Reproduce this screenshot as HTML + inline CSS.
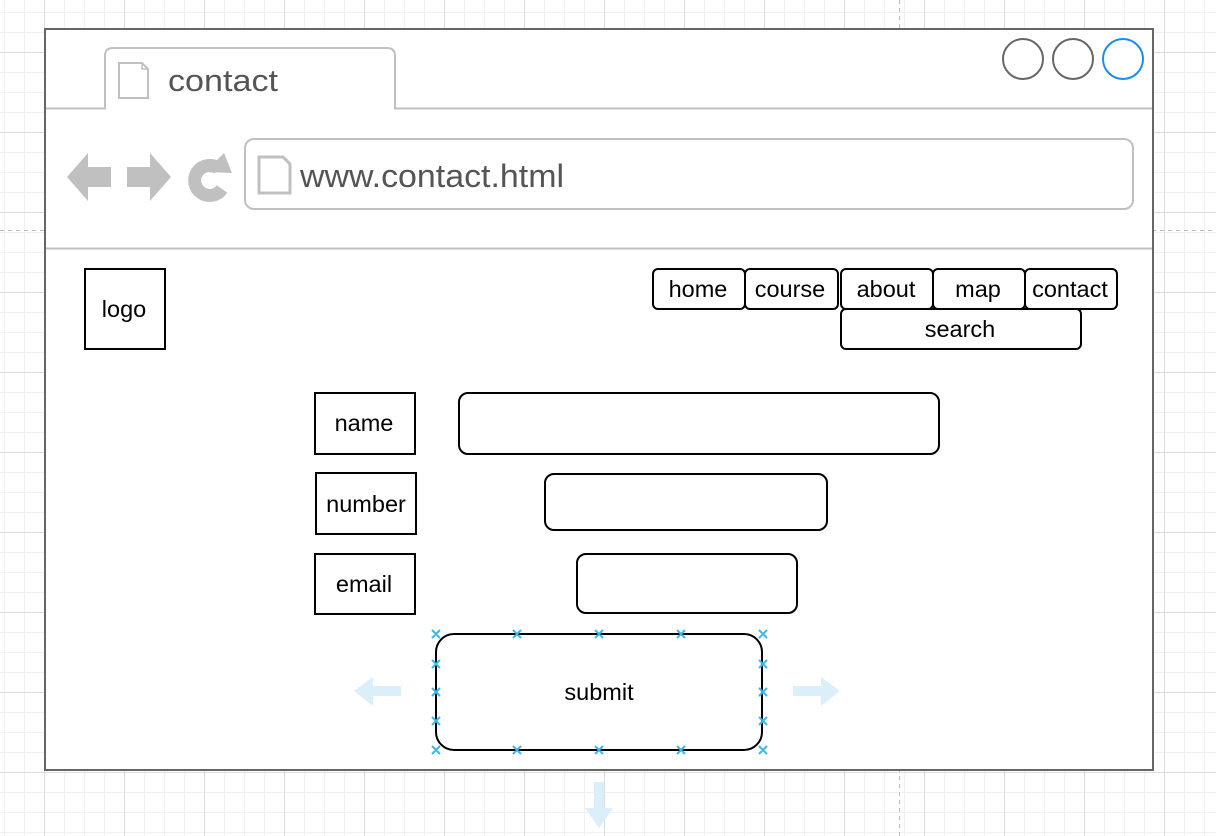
<!DOCTYPE html>
<html><head><meta charset="utf-8"><style>
html,body{margin:0;padding:0;width:1216px;height:836px;overflow:hidden;background:#fff}
svg{display:block}
text{font-family:"Liberation Sans",sans-serif}
</style></head><body>
<svg width="1216" height="836" viewBox="0 0 1216 836">
<defs>
<pattern id="minor" width="20" height="20" patternUnits="userSpaceOnUse" x="4" y="12">
<path d="M0 0.5H20M0.5 0V20" stroke="#f0f0f0" stroke-width="1" fill="none"/>
</pattern>
<pattern id="major" width="80" height="80" patternUnits="userSpaceOnUse" x="44" y="52">
<path d="M0 0.5H80M0.5 0V80" stroke="#dcdcdc" stroke-width="1" fill="none"/>
</pattern>
</defs>
<rect width="1216" height="836" fill="url(#minor)"/>
<rect width="1216" height="836" fill="url(#major)"/>
<line x1="899.5" y1="0" x2="899.5" y2="836" stroke="#bbb" stroke-dasharray="4,4"/>
<line x1="0" y1="230.5" x2="1216" y2="230.5" stroke="#bbb" stroke-dasharray="4,4"/>
<rect x="45" y="29" width="1108" height="741" fill="#fff" stroke="#666" stroke-width="2"/>
<path d="M46 108.5H105V56Q105 48 113 48H387Q395 48 395 56V108.5H1152" fill="none" stroke="#c0c0c0" stroke-width="2"/>
<line x1="46" y1="248.5" x2="1152" y2="248.5" stroke="#c0c0c0" stroke-width="2"/>
<path d="M119 63H142L148 69V98H119Z" fill="#fff" stroke="#c0c0c0" stroke-width="2"/>
<path d="M142 63V69H148" fill="none" stroke="#c0c0c0" stroke-width="1.5"/>
<text x="168" y="91" font-size="31" fill="#555" textLength="110" lengthAdjust="spacingAndGlyphs">contact</text>
<circle cx="1023" cy="59" r="20" fill="#fff" stroke="#666" stroke-width="2"/>
<circle cx="1073" cy="59" r="20" fill="#fff" stroke="#666" stroke-width="2"/>
<circle cx="1123" cy="59" r="20" fill="#fff" stroke="#1a8cf0" stroke-width="2"/>
<path d="M67 177L88 153V167H111V187H88V201Z" fill="#c0c0c0"/>
<path d="M171 177L150 153V167H127V187H150V201Z" fill="#c0c0c0"/>
<path d="M218 168A15 15 0 1 0 222 189" fill="none" stroke="#c0c0c0" stroke-width="13"/>
<path d="M205 172L232 173L224 153Z" fill="#c0c0c0"/>
<rect x="245" y="139" width="888" height="70" rx="9" fill="#fff" stroke="#c0c0c0" stroke-width="2"/>
<path d="M259 157H283L290 164V193H259Z" fill="#fff" stroke="#c0c0c0" stroke-width="3"/>
<text x="300" y="187" font-size="32" fill="#555" textLength="264" lengthAdjust="spacingAndGlyphs">www.contact.html</text>
<rect x="85" y="269" width="80" height="80" fill="#fff" stroke="#000" stroke-width="2"/>
<text x="124" y="317" font-size="23.5" text-anchor="middle">logo</text>
<g fill="#fff" stroke="#000" stroke-width="2">
<rect x="653" y="269" width="92" height="40" rx="5"/>
<rect x="745" y="269" width="93" height="40" rx="5"/>
<rect x="841" y="269" width="92" height="40" rx="5"/>
<rect x="933" y="269" width="92" height="40" rx="5"/>
<rect x="1025" y="269" width="92" height="40" rx="5"/>
<rect x="841" y="309" width="240" height="40" rx="5"/>
</g>
<g font-size="23.5" text-anchor="middle" fill="#000">
<text x="698" y="297">home</text>
<text x="790" y="297">course</text>
<text x="886" y="297">about</text>
<text x="978" y="297">map</text>
<text x="1070" y="297">contact</text>
<text x="960" y="337">search</text>
</g>
<g fill="#fff" stroke="#000" stroke-width="2">
<rect x="315" y="393" width="100" height="61"/>
<rect x="459" y="393" width="480" height="61" rx="9"/>
<rect x="316" y="473" width="100" height="61"/>
<rect x="545" y="474" width="282" height="56" rx="9"/>
<rect x="315" y="554" width="100" height="60"/>
<rect x="577" y="554" width="220" height="59" rx="9"/>
<rect x="436" y="634" width="326" height="116" rx="18"/>
</g>
<g font-size="23.5" text-anchor="middle" fill="#000">
<text x="364" y="431">name</text>
<text x="366" y="512">number</text>
<text x="364" y="592">email</text>
<text x="599" y="700">submit</text>
</g>
<g stroke="#3bb6ee" stroke-width="2">
<path d="M432 630l8 8m0-8l-8 8M513 630l8 8m0-8l-8 8M595 630l8 8m0-8l-8 8M677 630l8 8m0-8l-8 8M759 630l8 8m0-8l-8 8"/>
<path d="M432 746l8 8m0-8l-8 8M513 746l8 8m0-8l-8 8M595 746l8 8m0-8l-8 8M677 746l8 8m0-8l-8 8M759 746l8 8m0-8l-8 8"/>
<path d="M432 660l8 8m0-8l-8 8M432 688l8 8m0-8l-8 8M432 717l8 8m0-8l-8 8"/>
<path d="M759 660l8 8m0-8l-8 8M759 688l8 8m0-8l-8 8M759 717l8 8m0-8l-8 8"/>
</g>
<g fill="#dbeffa">
<path d="M354 691L373 677V686H401V696H373V706Z"/>
<path d="M840 691L821 677V686H793V696H821V706Z"/>
<path d="M599 828L585 808H594V782H604V808H613Z"/>
</g>
</svg>
</body></html>
